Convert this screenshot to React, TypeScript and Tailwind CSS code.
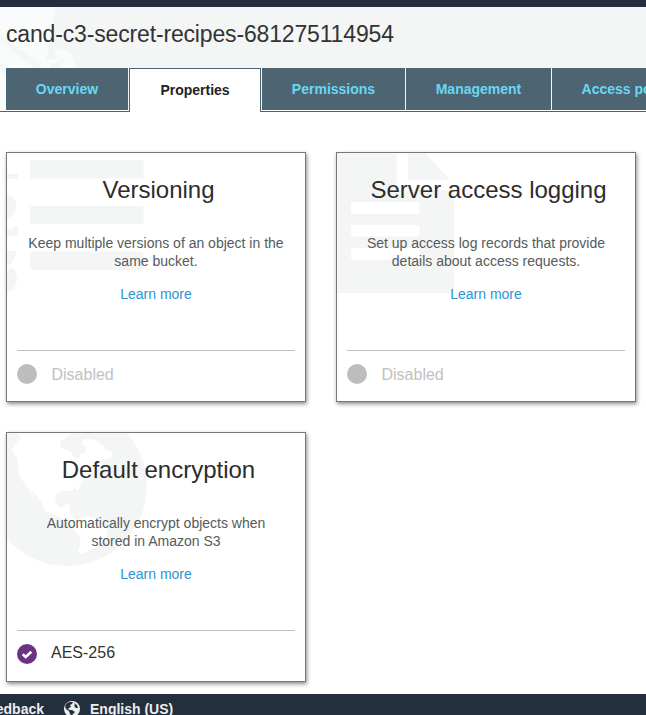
import type { ReactNode } from "react";

const TABS = [
  { label: "Overview", box: "w-[122px]" },
  { label: "Properties", active: true, box: "w-[132px]" },
  { label: "Permissions", box: "w-[143px]" },
  { label: "Management", box: "w-[145px]" },
  { label: "Access points", box: "w-[154px]" },
];

function VersionArt() {
  return (
    <svg className="absolute left-0 top-0" width="298" height="248" viewBox="7 153 298 248" fill="#f4f6f6">
      <rect x="30" y="160" width="113.5" height="18.5" rx="2" />
      <rect x="30" y="206" width="113.5" height="18" rx="2" />
      <rect x="30" y="251.5" width="113.5" height="18.5" rx="2" />
      <rect x="7" y="174" width="11" height="5" />
      <path d="M7 195C13 196 16.500 200 16.500 205C16.500 212 12 216 7 219Z" />
      <path d="M7 229H13V226H18V236H7Z" />
      <path d="M7 251H16V255L10 266C15 268 17 274 17 279C17 287 12 291 7 292V271L12 267L7 262Z" />
    </svg>
  );
}

function DocumentArt() {
  return (
    <svg className="absolute left-0 top-0" width="298" height="248" viewBox="337 153 298 248">
      <path fill="#f4f6f6" d="M337 153H397V187Q397 190 400 190H454V290Q454 293 451 293H337Z" />
      <path fill="#f4f6f6" d="M408 153H425L450 180H408Z" />
      <g fill="#fff">
        <rect x="351" y="202" width="68.500" height="12" rx="2" />
        <rect x="351" y="225" width="68.500" height="11.500" rx="2" />
        <rect x="351" y="248" width="68.500" height="11.500" rx="2" />
      </g>
    </svg>
  );
}

function GlobeArt() {
  return (
    <svg className="absolute left-0 top-0" width="298" height="248" viewBox="7 433 298 248">
      <circle cx="67" cy="486" r="80" fill="#f4f6f6" />
      <path
        fill="#fff"
        d="M18 433H71L69 436L61 440L60 447L67 450L72 453L74 458L78 459L80 454L85 453L87 448L82 444L83 439L92 439L97 441L104 446L106 450L113 453L112 457L106 459L100 460L102 465L97 470L90 475L84 480L80 484L78 491L75 488L70 491L62 491L56 495L55 501L59 507L64 507L66 504L70 505L69 511L72 513L73 518L78 520L84 517L92 517L101 522L108 529L105 540L97 547L88 551L81 554L78 551L80 545L80 537L74 530L70 524L65 519L58 517L52 513L45 511L43 504L37 497L31 489L33 496L37 503L34 500L29 489L22 480L19 474L18 463L17 457L13 453L11 450L16 444L21 439Z"
      />
    </svg>
  );
}

interface CardProps {
  title: string;
  lines: string[];
  art: ReactNode;
  enabled?: boolean;
  status: string;
}

function Card({ title, lines, art, enabled, status }: CardProps) {
  return (
    <section className="relative h-[250px] w-[300px] border border-[#777] bg-white shadow-[1px_2px_4px_rgba(0,0,0,0.45)]">
      {art}
      <div className="relative flex h-full flex-col px-[10px] text-center">
        <h2 className="mt-[21px] pl-[5px] text-[24px] leading-[32px] text-[#2d2d2d]">{title}</h2>
        <p className="mt-[28px] whitespace-nowrap text-[14px] leading-[18px] text-[#545b5b]">
          {lines[0]}
          <br />
          {lines[1]}
        </p>
        <a className="mt-[15px] text-[14px] leading-[18px] text-[#2b95d6]">Learn more</a>
        <div className="mt-[47px] flex h-[47px] items-center border-t border-[#bfc1c1] text-left text-[16px]">
          {enabled ? (
            <svg width="20" height="20" viewBox="0 0 20 20">
              <circle cx="10" cy="10" r="10" fill="#6b3384" />
              <path d="M5.700 10.200L8.700 13L14.300 7.700" fill="none" stroke="#fff" strokeWidth="2.600" />
            </svg>
          ) : (
            <span className="size-[20px] rounded-full bg-[#bcbebe]" />
          )}
          <span className={enabled ? "ml-[14px] pb-[2px] text-[#333]" : "ml-[14.5px] pt-[2px] text-[#bfc1c1]"}>{status}</span>
        </div>
      </div>
    </section>
  );
}

export default function App() {
  return (
    <div className="flex h-[715px] w-[646px] flex-col overflow-hidden bg-white font-['Liberation_Sans',Arial,sans-serif]">
      <div className="h-[7px] shrink-0 bg-[#232f3e]" />
      <header className="relative h-[105px] shrink-0 bg-[#f4f6f6]">
        <svg className="absolute left-0 top-0" width="90" height="104" viewBox="0 7 90 104">
          <path d="M0 7H56L46 60L57 59L54 49Q75 45 76 75V111H0Z" fill="#fafcfb" />
          <path d="M0 65L22 90M0 38L40 68M50 66Q60 68 62 58" fill="none" stroke="#f5f7f7" strokeWidth="6" />
        </svg>
        <h1 className="relative h-[61px] pl-[6px] pt-[11px] text-[23px] leading-[32px] tracking-[-0.16px] text-[#333]">
          cand-c3-secret-recipes-681275114954
        </h1>
        <nav className="relative flex h-[44px] gap-px border-b border-[#4d6572] pl-[6px] text-[14px] font-bold">
          <div className="absolute bottom-0 left-0 h-px w-full bg-white" />
          {TABS.map((tab) => (
            <div
              key={tab.label}
              className={`${tab.box} relative flex shrink-0 justify-center whitespace-nowrap ${
                tab.active
                  ? "h-[44px] border border-b-0 border-[#4d6572] bg-white pt-[11px] leading-[20px] text-[#222]"
                  : "h-[42px] bg-[#4d6572] pt-[11px] leading-[20px] text-[#68d8f5]"
              }`}
            >
              {tab.label}
            </div>
          ))}
        </nav>
      </header>
      <main className="grid h-[582px] shrink-0 grid-cols-[300px_300px] content-start gap-[30px] pl-[6px] pt-[40px]">
        <Card title="Versioning" lines={["Keep multiple versions of an object in the", "same bucket."]} art={<VersionArt />} status="Disabled" />
        <Card title="Server access logging" lines={["Set up access log records that provide", "details about access requests."]} art={<DocumentArt />} status="Disabled" />
        <Card title="Default encryption" lines={["Automatically encrypt objects when", "stored in Amazon S3"]} art={<GlobeArt />} enabled status="AES-256" />
      </main>
      <footer className="flex h-[21px] shrink-0 bg-[#232f3e] text-[14px] font-bold leading-[30px] text-[#eee]">
        <div className="flex w-[44px] shrink-0 justify-end whitespace-nowrap">Feedback</div>
        <svg className="ml-[20px] mt-[7px] shrink-0" width="16" height="16" viewBox="0 0 16 16">
          <circle cx="8" cy="8" r="8" fill="#eee" />
          <path d="M1 5L3 2L6 1L9 1L8 3L6 4L7 6L5 7L4 8L6 9L8 9L11 11L9 13L8 15L6 13L5 10L2 8ZM10 2L13 4L14 7L12 7L10 5L11 4Z" fill="#232f3e" />
        </svg>
        <span className="ml-[10px]">English (US)</span>
      </footer>
    </div>
  );
}
